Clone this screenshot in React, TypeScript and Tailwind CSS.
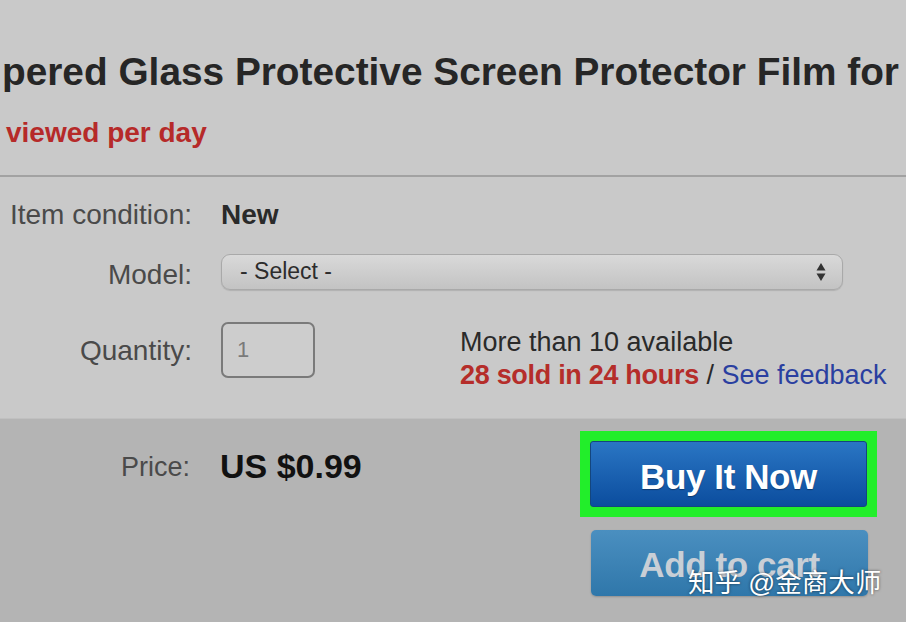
export default function App() {
  return (
    <div
      className="relative w-[906px] h-[622px] overflow-hidden bg-[#c9c9c9] text-[#333]"
      style={{ fontFamily: '"Liberation Sans", Arial, "Noto Sans CJK SC", sans-serif' }}
    >
      {/* title block */}
      <div className="pt-[53px]">
        <h1 className="overflow-hidden whitespace-nowrap pl-[2px] text-[38.8px] leading-none font-bold text-[#262626]">
          pered Glass Protective Screen Protector Film for iPhone
        </h1>
        <p className="mt-[27px] pl-[6px] text-[28px] leading-none font-bold text-[#b62a29]">
          viewed per day
        </p>
      </div>

      <div className="mt-[28px] h-[2px] bg-[#a2a2a2]" />

      {/* item details */}
      <div className="pt-[24px] pb-[26px] text-[28px] leading-none">
        <div className="flex items-center h-[28px]">
          <span className="w-[192px] text-right text-[#4a4a4a] whitespace-nowrap">Item condition:</span>
          <span className="ml-[29px] font-bold text-[#2a2a2a]">New</span>
        </div>

        <div className="flex items-center mt-[25px]">
          <span className="w-[192px] text-right text-[#4a4a4a] pt-[6px]">Model:</span>
          <div className="ml-[29px] flex items-center justify-between w-[622px] h-[36px] rounded-[9px] border border-[#a9a9a9] bg-gradient-to-b from-[#d9d9d9] to-[#c3c3c3] pl-[18px] pr-[16px] shadow-[0_1px_1px_rgba(0,0,0,0.12)]">
            <span className="text-[23px] text-[#2c2c2c]">- Select -</span>
            <svg width="10" height="20" viewBox="0 0 10 20">
              <path d="M5 1 L9.5 8.5 L0.5 8.5 Z" fill="#333" />
              <path d="M5 19 L9.5 11.5 L0.5 11.5 Z" fill="#333" />
            </svg>
          </div>
        </div>

        <div className="flex items-start mt-[32px]">
          <span className="w-[192px] text-right text-[#4a4a4a] mt-[15px]">Quantity:</span>
          <div className="ml-[29px] w-[94px] h-[56px] rounded-[7px] border-2 border-[#7a7a7a] bg-[#cdcdcd] pl-[14px] flex items-center">
            <span className="text-[22px] text-[#7a7a7a]">1</span>
          </div>
          <div className="ml-[145px] mt-[4px] text-[27px] leading-[33px]">
            <div className="text-[#2a2a2a]">More than 10 available</div>
            <div className="whitespace-nowrap">
              <span className="font-bold text-[#b52d2a] tracking-[-0.3px]">28 sold in 24 hours</span>
              <span className="text-[#2a2a2a]"> / </span>
              <span className="text-[#2a3fa0]">See feedback</span>
            </div>
          </div>
        </div>
      </div>

      {/* price / buy area */}
      <div className="flex h-[210px] bg-[#b4b4b4] border-t border-[#c0c0c0] pt-[12px]">
        <div className="flex items-center h-[40px] mt-[15px]">
          <span className="w-[190px] text-right text-[27px] leading-none text-[#4a4a4a] pt-[3px]">Price:</span>
          <span className="ml-[30px] text-[34px] leading-none font-bold text-[#111]">US $0.99</span>
        </div>
        <div className="ml-auto mr-[29px] flex flex-col">
          <div className="w-[297px] h-[86px] bg-[#22ee2a] p-[10px]">
            <div className="h-full rounded-[3px] bg-gradient-to-b from-[#2a76c4] to-[#0b4d9e] flex items-center justify-center border border-[#14467e] pt-[6px]">
              <span className="text-[35px] leading-none font-bold text-white tracking-[-0.4px] [text-shadow:0_1px_1px_rgba(0,0,0,0.35)]">
                Buy It Now
              </span>
            </div>
          </div>
          <div className="ml-[11px] mt-[13px] w-[277px] h-[66px] rounded-[5px] bg-gradient-to-b from-[#4a8fc0] to-[#2f77aa] flex items-center justify-center pt-[3px] shadow-[0_1px_2px_rgba(0,0,0,0.2)]">
            <span className="text-[35px] leading-none font-bold text-[#c9cfd6] tracking-[-0.4px]">Add to cart</span>
          </div>
        </div>
      </div>

      {/* watermark */}
      <div className="absolute left-[688px] top-[570px] whitespace-nowrap text-[26.5px] leading-none text-white [text-shadow:0_0_3px_rgba(0,0,0,0.6)]">
        知乎 @金商大师
      </div>
    </div>
  );
}
